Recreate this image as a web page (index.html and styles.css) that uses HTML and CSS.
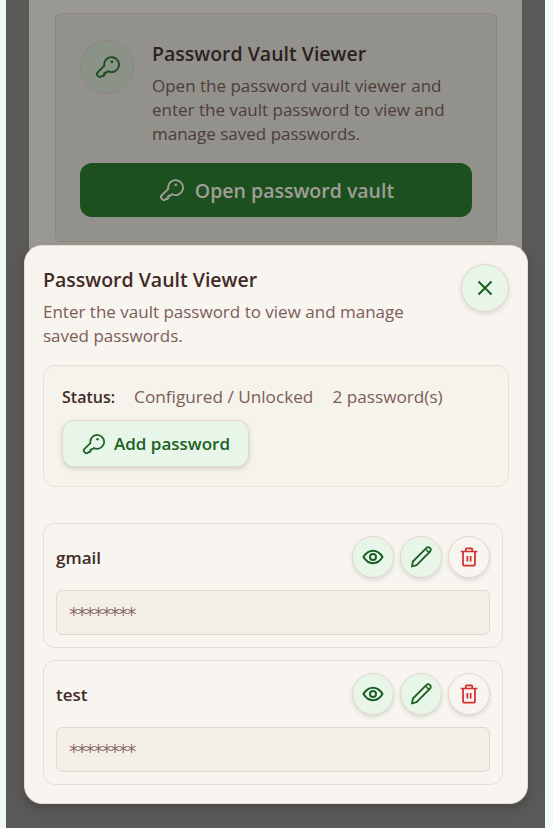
FILE: index.html
```html
<!DOCTYPE html>
<html lang="en">
<head>
    <meta charset="UTF-8">
    <meta name="viewport" content="width=device-width, initial-scale=1.0">
    <title>Password Vault Viewer</title>
    <link rel="stylesheet" href="styles.css">
</head>
<body>
    <svg class="icon-defs" aria-hidden="true">
        <symbol id="key" viewBox="0 0 24 24">
            <path d="M9.600 10.800 3.300 17.100a2 2 0 0 0 0 2.800l.8.800a2 2 0 0 0 2.800 0l.8-.8.800.5 1.200-1.200-.5-1 1.200-1.200 1 .5 1.500-1.600a6.900 6.900 0 1 0-3.600-5.900z" fill="none" stroke="currentColor" stroke-width="1.700" stroke-linejoin="round"/>
            <circle cx="16.500" cy="7.300" r="1.200" fill="currentColor"/>
        </symbol>
        <symbol id="eye" viewBox="0 0 24 24">
            <path d="M2.500 12C5 7.800 8.200 5.800 12 5.800s7 2 9.500 6.200c-2.500 4.200-5.700 6.200-9.500 6.200S5 16.200 2.500 12z" fill="none" stroke="currentColor" stroke-width="2"/>
            <circle cx="12" cy="12" r="3" fill="none" stroke="currentColor" stroke-width="2"/>
        </symbol>
        <symbol id="pencil" viewBox="0 0 24 24">
            <path d="M3 21.500l.9-5L17.500 2.900a2.300 2.300 0 0 1 3.300 0l.3.3a2.300 2.300 0 0 1 0 3.300L7.600 20.200z" fill="none" stroke="currentColor" stroke-width="1.800" stroke-linejoin="round"/>
            <path d="M17 4.500l3 3" fill="none" stroke="currentColor" stroke-width="1.500"/>
        </symbol>
        <symbol id="trash" viewBox="0 0 24 24">
            <path d="M3 6h18M8.500 6V3.500a1 1 0 0 1 1-1h5a1 1 0 0 1 1 1V6M5.500 6v13.500a2 2 0 0 0 2 2h9a2 2 0 0 0 2-2V6M10.200 11v6M13.800 11v6" fill="none" stroke="currentColor" stroke-width="1.900"/>
        </symbol>
    </svg>

    <div class="screen">
        <!-- Page behind the dialog -->
        <main class="page">
            <section class="vault-card">
                <div class="vault-intro">
                    <div class="vault-badge"><svg class="icon-key-big"><use href="#key"/></svg></div>
                    <div>
                        <h2>Password Vault Viewer</h2>
                        <p>Open the password vault viewer and enter the vault password to view and manage saved passwords.</p>
                    </div>
                </div>
                <button class="open-btn" type="button"><svg class="icon-key-big"><use href="#key"/></svg>Open password vault</button>
            </section>
        </main>

        <!-- Vault dialog -->
        <div class="modal">
            <div class="modal-head">
                <div>
                    <h1>Password Vault Viewer</h1>
                    <p>Enter the vault password to view and manage saved passwords.</p>
                </div>
                <button class="close-btn" type="button" aria-label="Close">
                    <svg viewBox="0 0 24 24"><path d="M5.500 5.500l13 13M18.500 5.500l-13 13" fill="none" stroke="currentColor" stroke-width="2"/></svg>
                </button>
            </div>

            <div class="status-box">
                <div class="status-line">
                    <strong>Status:</strong>
                    <span>Configured / Unlocked</span>
                    <span>2 password(s)</span>
                </div>
                <button class="add-btn" type="button"><svg class="icon-key-add"><use href="#key"/></svg>Add password</button>
            </div>

            <div class="entries">
                <div class="entry">
                    <div class="entry-top">
                        <span class="entry-name">gmail</span>
                        <div class="entry-actions">
                            <button class="round-btn" type="button" aria-label="Show"><svg class="icon-eye"><use href="#eye"/></svg></button>
                            <button class="round-btn" type="button" aria-label="Edit"><svg class="icon-pencil"><use href="#pencil"/></svg></button>
                            <button class="round-btn danger" type="button" aria-label="Delete"><svg class="icon-trash"><use href="#trash"/></svg></button>
                        </div>
                    </div>
                    <div class="secret">********</div>
                </div>
                <div class="entry">
                    <div class="entry-top">
                        <span class="entry-name">test</span>
                        <div class="entry-actions">
                            <button class="round-btn" type="button" aria-label="Show"><svg class="icon-eye"><use href="#eye"/></svg></button>
                            <button class="round-btn" type="button" aria-label="Edit"><svg class="icon-pencil"><use href="#pencil"/></svg></button>
                            <button class="round-btn danger" type="button" aria-label="Delete"><svg class="icon-trash"><use href="#trash"/></svg></button>
                        </div>
                    </div>
                    <div class="secret">********</div>
                </div>
            </div>
        </div>
    </div>
</body>
</html>
```

FILE: styles.css
```css
* {
    box-sizing: border-box;
}

body {
    font-family: "Open Sans", "Noto Sans", sans-serif;
    background-color: #effaf8;
    margin: 0;
    padding: 0 8px 0 6px;
    height: 828px;
    overflow: hidden;
}

h1, h2, p {
    margin: 0;
}

button {
    font-family: inherit;
    cursor: pointer;
}

.icon-defs {
    display: none;
}

.screen {
    position: relative;
    height: 828px;
    background-color: #5a5958;
    padding: 0 23px;
    overflow: hidden;
}

.page {
    background-color: #9a9893;
    height: 790px;
    padding: 13px 25px 0 26px;
}

.vault-card {
    background-color: #93918c;
    border: 1px solid #8c8780;
    border-radius: 6px;
    height: 229px;
    padding: 26px 24px 0 24px;
}

.vault-intro {
    display: flex;
    gap: 18px;
}

.vault-badge {
    flex: 0 0 54px;
    height: 54px;
    border-radius: 50%;
    background-color: #8b9389;
    border: 1px solid #8c8780;
    color: #1b4d1e;
    display: flex;
    align-items: center;
    justify-content: center;
}

.icon-key-big {
    width: 26px;
    height: 26px;
}

.vault-intro h2 {
    font-size: 19.500px;
    font-weight: 600;
    line-height: 26px;
    color: #2c211f;
    margin-top: 1px;
    margin-bottom: 7px;
}

.vault-intro p {
    font-size: 17px;
    line-height: 24px;
    color: #4c3d39;
}

.open-btn {
    display: flex;
    align-items: center;
    justify-content: center;
    gap: 11px;
    width: 100%;
    height: 54px;
    margin-top: 17px;
    background-color: #1d501f;
    border: none;
    border-radius: 12px;
    color: #a09e98;
    font-size: 19.500px;
    font-weight: 600;
}

.modal {
    position: absolute;
    top: 245px;
    left: 18px;
    width: 504px;
    height: 559px;
    background-color: #f8f4ef;
    border: 1px solid #e6dccf;
    border-radius: 18px;
    box-shadow: 0 4px 10px rgba(0, 0, 0, 0.2);
    padding: 18px;
}

.modal-head {
    display: flex;
    justify-content: space-between;
    align-items: flex-start;
}

.modal-head > div {
    width: 385px;
}

.modal h1 {
    font-size: 19.500px;
    font-weight: 600;
    line-height: 26px;
    color: #412b28;
    margin-top: 3px;
    margin-bottom: 7px;
}

.modal-head p {
    font-size: 17px;
    line-height: 24px;
    color: #7b5e57;
}

.close-btn {
    width: 48px;
    height: 48px;
    padding: 0;
    border-radius: 50%;
    background-color: #e8f5e9;
    border: 1px solid #e2d8cb;
    box-shadow: 0 2px 5px rgba(0, 0, 0, 0.12);
    color: #1b6023;
    display: flex;
    align-items: center;
    justify-content: center;
}

.close-btn svg {
    width: 24px;
    height: 24px;
}

.status-box {
    margin-top: 17px;
    height: 122px;
    background-color: #f6f2ec;
    border: 1px solid #e8dfd4;
    border-radius: 12px;
    padding: 19px 18px;
}

.status-line {
    display: flex;
    gap: 19px;
    font-size: 17.200px;
    line-height: 24px;
    color: #7b5e57;
}

.status-line strong {
    font-size: 16px;
    font-weight: 600;
    color: #412b28;
}

.add-btn {
    display: flex;
    align-items: center;
    gap: 9px;
    height: 47px;
    margin-top: 11px;
    padding: 0 18px;
    background-color: #e8f5e9;
    border: 1px solid #e2d8cb;
    border-radius: 12px;
    box-shadow: 0 2px 5px rgba(0, 0, 0, 0.14);
    color: #1b6023;
    font-size: 17px;
    font-weight: 600;
}

.icon-key-add {
    width: 24px;
    height: 24px;
}

.entries {
    margin-top: 36px;
    width: 460px;
    display: flex;
    flex-direction: column;
    gap: 12px;
}

.entry {
    height: 125px;
    border: 1px solid #e8dfd4;
    border-radius: 12px;
    padding: 12px;
}

.entry-top {
    display: flex;
    justify-content: space-between;
    align-items: center;
}

.entry-name {
    font-size: 17px;
    font-weight: 600;
    color: #412b28;
}

.entry-actions {
    display: flex;
    gap: 6px;
}

.round-btn {
    width: 42px;
    height: 42px;
    padding: 0;
    border-radius: 50%;
    background-color: #e8f5e9;
    border: 1px solid #e2d8cb;
    box-shadow: 0 2px 4px rgba(0, 0, 0, 0.12);
    color: #1b6023;
    display: flex;
    align-items: center;
    justify-content: center;
}

.round-btn.danger {
    background-color: #f8f4ef;
    color: #d32f2f;
}

.icon-eye {
    width: 24px;
    height: 24px;
}

.icon-pencil {
    width: 24px;
    height: 24px;
}

.icon-trash {
    width: 22px;
    height: 22px;
}

.secret {
    height: 45px;
    margin-top: 12px;
    padding: 0 12px;
    background-color: #f4eee9;
    border: 1px solid #e2d8cb;
    border-radius: 6px;
    color: #8a6d65;
    font-family: "DejaVu Sans", sans-serif;
    font-size: 19px;
    letter-spacing: -1.250px;
    line-height: 46px;
}
```
